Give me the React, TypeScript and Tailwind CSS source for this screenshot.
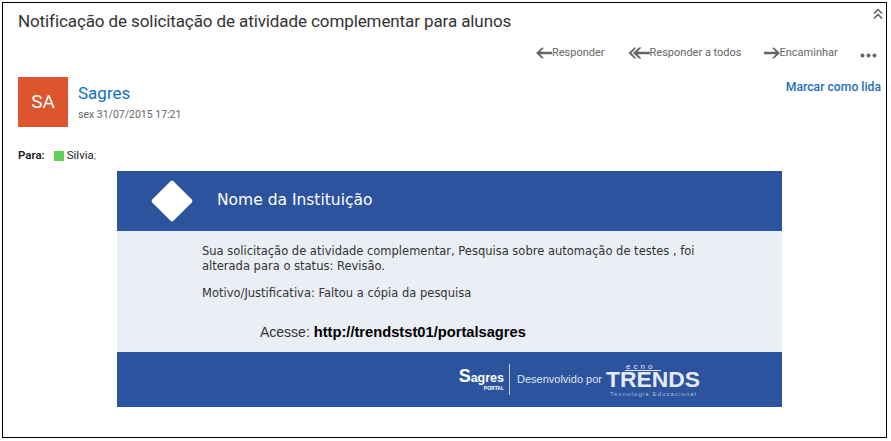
const SEGOE = 'font-["Roboto","Open_Sans",sans-serif]'

function ArrowIcon({ double, flip }: { double?: boolean; flip?: boolean }) {
  return (
    <svg width={double ? 22 : 16} height="12" viewBox={double ? '0 0 22 12' : '0 0 17 12'} className={`shrink-0 ${flip ? '-scale-x-100' : ''}`} fill="#666666">
      {double && <path d="M6.5 0.5 L8.5 0.5 L3.5 6 L8.5 11.5 L6.5 11.5 L0.5 6 Z" />}
      <path d={double ? 'M11 0.5 L13.5 0.5 L9.5 4.8 L22 4.8 L22 7.2 L9.5 7.2 L13.5 11.5 L11 11.5 L5 6 Z' : 'M6 0.5 L8.5 0.5 L4.5 4.8 L17 4.8 L17 7.2 L4.5 7.2 L8.5 11.5 L6 11.5 L0 6 Z'} />
    </svg>
  )
}

function Action({ label, double, flip, className }: { label: string; double?: boolean; flip?: boolean; className?: string }) {
  return (
    <span className={`flex items-center whitespace-nowrap text-[11px] text-[#666666] ${className ?? ''}`}>
      <ArrowIcon double={double} flip={flip} />
      {label}
    </span>
  )
}

function TrendsLogo() {
  return (
    <svg width="96" height="34" viewBox="0 0 96 34" className="ml-[3px] shrink-0" fontFamily="Liberation Sans, sans-serif">
      <rect x="20" y="7" width="36" height="1" fill="#e6ebf3" />
      <text x="21" y="6" fontSize="8" letterSpacing="3" fill="#e6ebf3">ecno</text>
      <text x="1" y="24" fontSize="22" fontWeight="900" textLength="94" lengthAdjust="spacingAndGlyphs" fill="#e6ebf3">TRENDS</text>
      <text x="5" y="33" fontSize="6" letterSpacing="1.1" fill="#b0bfd8">Tecnologia Educacional</text>
    </svg>
  )
}

export default function App() {
  return (
    <div className="w-[891px] h-[441px] bg-white pt-[2px] pl-[2px]">
      <div className={`relative w-[885px] h-[436px] border border-black ${SEGOE}`}>
        <div className="pl-[15px] pt-[5px] text-[17px] tracking-[-0.1px] leading-[26px] text-[#333333]">
          Notificação de solicitação de atividade complementar para alunos
        </div>
        <svg className="absolute right-[3px] top-[5px]" width="10" height="12" viewBox="0 0 10 12" fill="none" stroke="#555555" strokeWidth="1.4">
          <path d="M1 5.5 L5 1.5 L9 5.5" />
          <path d="M1 10.5 L5 6.5 L9 10.5" />
        </svg>

        <div className="flex items-center mt-[9px] h-[20px] pl-[533px]">
          <Action label="Responder" />
          <Action label="Responder a todos" double className="ml-[23px]" />
          <Action label="Encaminhar" flip className="ml-[22px]" />
          <svg className="ml-[22px] mt-[4px]" width="17" height="5" viewBox="0 0 17 5" fill="#666666">
            <circle cx="2.5" cy="2.5" r="2" />
            <circle cx="8.5" cy="2.5" r="2" />
            <circle cx="14.5" cy="2.5" r="2" />
          </svg>
        </div>

        <div className="flex justify-between mt-[14px] pl-[15px] pr-[5px]">
          <div className="flex">
            <div className="w-[50px] h-[50px] bg-[#dc552c] flex items-center justify-center text-white text-[19px]">SA</div>
            <div className="ml-[10px]">
              <div className="text-[#0f72c4] text-[17px] leading-[22px] mt-[5px]">Sagres</div>
              <div className="text-[#666666] text-[10.5px] leading-[14px] mt-[4px]">sex 31/07/2015 17:21</div>
            </div>
          </div>
          <div className="text-[#1f6fc0] text-[12.2px] font-medium leading-[16px] mt-[2px]">Marcar como lida</div>
        </div>

        <div className="flex items-center pl-[15px] mt-[22px] h-[14px] text-[11.5px] text-[#222222]">
          <span className="font-semibold">Para:</span>
          <span className="w-[10px] h-[10px] bg-[#5dd255] ml-[9px] mr-[3px]" />
          <span>Silvia</span>
          <span className="text-[#888888]">;</span>
        </div>

        <div className='w-[665px] ml-[114px] mt-[8px] font-["DejaVu_Sans",sans-serif]'>
          <div className="h-[60px] bg-[#2c539e] flex items-center pl-[40px]">
            <div className="w-[30px] h-[30px] bg-white rotate-45 rounded-[2px]" />
            <span className="ml-[30px] text-white text-[15.5px]">Nome da Instituição</span>
          </div>
          <div className="h-[121px] bg-[#ebeef4] pl-[85px] pt-[13px] text-[11.5px] leading-[15px] text-[#333333]">
            <p>Sua solicitação de atividade complementar, Pesquisa sobre automação de testes , foi</p>
            <p>alterada para o status: Revisão.</p>
            <p className="mt-[12px]">Motivo/Justificativa: Faltou a cópia da pesquisa</p>
            <p className='mt-[21px] ml-[58px] font-["Liberation_Sans",sans-serif] text-[14px] leading-[20px]'>
              Acesse: <b className="text-black text-[14.7px]">http://trendstst01/portalsagres</b>
            </p>
          </div>
          <div className='h-[55px] bg-[#2c539e] flex items-center justify-end pr-[81px] font-["Liberation_Sans",sans-serif] text-white'>
            <div className="flex flex-col items-end pr-[5px]">
              <span className="leading-[14px] font-bold whitespace-nowrap">
                <span className="text-[18px]">S</span>
                <span className="text-[12.5px]">agres</span>
              </span>
              <span className="text-[5px] leading-[6px] font-bold">PORTAL</span>
            </div>
            <div className="w-px h-[31px] bg-[#c9d3e6]" />
            <span className="ml-[7px] text-[11px] text-[#dfe6f2] whitespace-nowrap">Desenvolvido por</span>
            <TrendsLogo />
          </div>
        </div>
      </div>
    </div>
  )
}
